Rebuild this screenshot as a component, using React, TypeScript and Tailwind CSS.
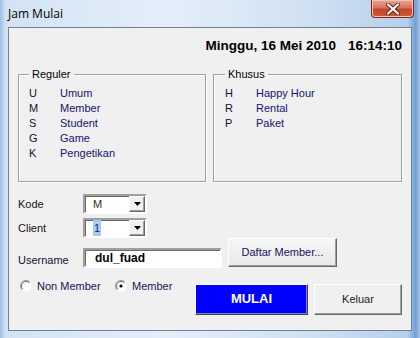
import React from "react";

const reguler = [
  ["U", "Umum"],
  ["M", "Member"],
  ["S", "Student"],
  ["G", "Game"],
  ["K", "Pengetikan"],
];

const khusus = [
  ["H", "Happy Hour"],
  ["R", "Rental"],
  ["P", "Paket"],
];

function GroupBox({ title, items, className }: { title: string; items: string[][]; className: string }) {
  return (
    <fieldset
      className={`h-[115px] border border-[#a0a0a0] shadow-[inset_1px_1px_0_#ffffff,1px_1px_0_#ffffff] ${className}`}
    >
      <legend className="px-[3px] text-[11px] leading-[14px] text-black">{title}</legend>
      <div className="flex flex-col pt-[5px]">
        {items.map(([k, v]) => (
          <div key={k} className="flex h-[15px] items-center text-[11px]">
            <span className="w-[31px] text-[#101030]">{k}</span>
            <span className="text-[#14146e]">{v}</span>
          </div>
        ))}
      </div>
    </fieldset>
  );
}

function Combo({ value, selected }: { value: string; selected?: boolean }) {
  return (
    <div className="flex h-[20px] w-[64px] border-2 border-t-[#a0a0a0] border-l-[#a0a0a0] border-b-white border-r-white bg-white shadow-[inset_1px_1px_0_#696969]">
      <div className="flex flex-1 items-center pl-[8px] text-[11px]">
        <span className={selected ? "bg-[#a8cdf2] px-[1px] text-[#0a2a80]" : "text-[#303010]"}>{value}</span>
      </div>
      <div className="flex h-[16px] w-[16px] items-center justify-center border border-t-white border-l-white border-b-[#696969] border-r-[#696969] bg-[#f0f0f0] shadow-[inset_-1px_-1px_0_#a0a0a0]">
        <svg width="7" height="4" viewBox="0 0 7 4">
          <path d="M0 0h7L3.5 4z" fill="#000" />
        </svg>
      </div>
    </div>
  );
}

function Radio({ checked, label }: { checked?: boolean; label: string }) {
  return (
    <div className="flex items-center gap-[5px]">
      <svg width="12" height="12" viewBox="0 0 12 12">
        <circle cx="6" cy="6" r="5.5" fill="#ffffff" />
        <path d="M10 2A5.5 5.5 0 0 0 2 10" stroke="#a0a0a0" strokeWidth="1" fill="none" />
        <path d="M9.2 2.8A4.5 4.5 0 0 0 2.8 9.2" stroke="#696969" strokeWidth="1" fill="none" />
        {checked && <circle cx="6" cy="6" r="1.6" fill="#000" />}
      </svg>
      <span className="text-[11px] text-[#14145a]">{label}</span>
    </div>
  );
}

export default function App() {
  return (
    <div
      className="relative flex h-[338px] w-[420px] flex-col bg-[linear-gradient(90deg,#9fbfe6_0px,#d3e3f4_6px,#e4eef9_40%,#cfe0f2_75%,#b6cfea_97%,#6e9fd8_99%,#a9c6ea_100%)]"
      style={{ fontFamily: '"Liberation Sans", Arial, sans-serif' }}
    >
      <div className="flex h-[27px] items-center justify-between pl-[8px]">
        <span className="text-[12px] text-black" style={{ fontFamily: '"Open Sans", "Noto Sans", sans-serif' }}>
          Jam Mulai
        </span>
        <div className="mb-[9px] mr-[6px] flex h-[18px] w-[43px] items-center justify-center rounded-b-[4px] border border-t-0 border-[#7a2a1c] bg-[linear-gradient(180deg,#e8a595_0%,#d9735c_45%,#c4452a_55%,#d25a3a_100%)] shadow-[inset_0_0_0_1px_#f3c2b4]">
          <svg width="16" height="12" viewBox="0 0 16 12">
            <path d="M3 1.5L13 10.5M13 1.5L3 10.5" stroke="#5a2418" strokeWidth="4" strokeLinecap="round" />
            <path d="M3 1.5L13 10.5M13 1.5L3 10.5" stroke="#ffffff" strokeWidth="2.2" strokeLinecap="round" />
          </svg>
        </div>
      </div>

      <div className="ml-[8px] flex h-[304px] w-[404px] flex-col border border-[#6f8199] bg-[#f0f0f0] px-[9px]">
        <div className="mt-[10px] flex h-[16px] items-center justify-end gap-[12px] text-[13.5px] font-bold text-black">
          <span>Minggu, 16 Mei 2010</span>
          <span>16:14:10</span>
        </div>

        <div className="mt-[13px] flex gap-[7px]">
          <GroupBox title="Reguler" items={reguler} className="w-[189px] pl-[10px]" />
          <GroupBox title="Khusus" items={khusus} className="w-[190px] pl-[11px]" />
        </div>

        <div className="mt-[12px] flex items-center text-[11px]">
          <span className="w-[65px] text-[#201010]">Kode</span>
          <Combo value="M" />
        </div>
        <div className="mt-[4px] flex items-center text-[11px]">
          <span className="w-[65px] text-[#201010]">Client</span>
          <Combo value="1" selected />
        </div>

        <div className="flex items-start">
          <span className="mt-[14px] w-[65px] text-[11px] text-[#201030]">Username</span>
          <div className="mt-[10px] flex h-[20px] w-[139px] items-center border-2 border-t-[#a0a0a0] border-l-[#a0a0a0] border-b-white border-r-white bg-white pl-[10px] text-[12px] font-bold text-black shadow-[inset_1px_1px_0_#696969]">
            dul_fuad
          </div>
          <button className="ml-[6px] h-[29px] w-[109px] border border-t-white border-l-white border-b-[#696969] border-r-[#696969] bg-[linear-gradient(180deg,#f6f6f6,#e8e8e8)] text-[11px] text-[#14145a] shadow-[inset_-1px_-1px_0_#a0a0a0]">
            Daftar Member...
          </button>
        </div>

        <div className="mt-[9px] flex items-start">
          <div className="flex items-center pl-[2px]">
            <div className="w-[95px]">
              <Radio label="Non Member" />
            </div>
            <Radio checked label="Member" />
          </div>
          <div className="ml-auto mt-[6px] flex gap-[6px]">
            <button className="h-[31px] w-[113px] border border-t-white border-l-white border-b-[#404040] border-r-[#404040] bg-[#0000ff] text-[13px] font-bold text-white shadow-[inset_-1px_-1px_0_#8080c0]">
              MULAI
            </button>
            <button className="h-[31px] w-[88px] border border-t-white border-l-white border-b-[#696969] border-r-[#696969] bg-[#f0f0f0] text-[11px] text-[#202010] shadow-[inset_-1px_-1px_0_#a0a0a0]">
              Keluar
            </button>
          </div>
        </div>
      </div>
    </div>
  );
}
